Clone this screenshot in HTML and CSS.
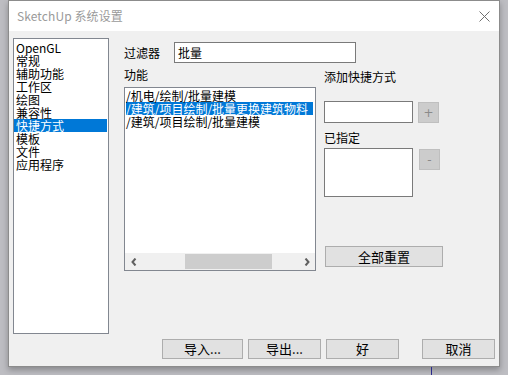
FILE: index.html
```html
<!DOCTYPE html>
<html lang="zh-CN">
<head>
    <meta charset="UTF-8">
    <title>SketchUp 系统设置</title>
    <link rel="stylesheet" href="styles.css">
</head>
<body>
    <div class="window">
        <div class="titlebar">
            <span class="title">SketchUp 系统设置</span>
            <svg class="close" width="11" height="11" viewBox="0 0 11 11">
                <path d="M0.5 0.5 L10.5 10.5 M10.5 0.5 L0.5 10.5" stroke="#707070" stroke-width="1" fill="none"/>
            </svg>
        </div>

        <div class="content">
            <ul class="catlist">
                <li>OpenGL</li>
                <li>常规</li>
                <li>辅助功能</li>
                <li>工作区</li>
                <li>绘图</li>
                <li>兼容性</li>
                <li class="selected">快捷方式</li>
                <li>模板</li>
                <li>文件</li>
                <li>应用程序</li>
            </ul>

            <div class="panel">
                <div class="filter-row">
                    <label class="filter-label">过滤器</label>
                    <div class="textbox filter-box">批量</div>
                </div>

                <div class="columns">
                    <div class="col-func">
                        <div class="label">功能</div>
                        <div class="funclist">
                            <ul class="func-items">
                                <li>/机电/绘制/批量建模</li>
                                <li class="selected">/建筑/项目绘制/批量更换建筑物料</li>
                                <li>/建筑/项目绘制/批量建模</li>
                            </ul>
                            <div class="hscroll">
                                <span class="arrow">
                                    <svg width="6" height="8" viewBox="0 0 6 8"><path d="M4.5 0.5 L1.5 4 L4.5 7.5" stroke="#606060" stroke-width="2" fill="none"/></svg>
                                </span>
                                <div class="track"><div class="thumb"></div></div>
                                <span class="arrow">
                                    <svg width="6" height="8" viewBox="0 0 6 8"><path d="M1.5 0.5 L4.5 4 L1.5 7.5" stroke="#606060" stroke-width="2" fill="none"/></svg>
                                </span>
                            </div>
                        </div>
                    </div>

                    <div class="col-keys">
                        <div class="label label-add">添加快捷方式</div>
                        <div class="key-row">
                            <div class="textbox key-box"></div>
                            <button class="btn small-btn">+</button>
                        </div>
                        <div class="label label-assigned">已指定</div>
                        <div class="key-row">
                            <div class="textbox assigned-box"></div>
                            <button class="btn small-btn minus-btn">-</button>
                        </div>
                        <button class="btn reset-btn">全部重置</button>
                    </div>
                </div>
            </div>
        </div>

        <div class="footer">
            <button class="btn foot-btn import-btn">导入...</button>
            <button class="btn foot-btn">导出...</button>
            <button class="btn foot-btn">好</button>
            <button class="btn foot-btn cancel-btn">取消</button>
        </div>
    </div>
    <div class="behind-line"></div>
</body>
</html>
```

FILE: styles.css
```css
* { box-sizing: border-box; }

body {
    margin: 0;
    width: 508px;
    height: 375px;
    overflow: hidden;
    background: #bdbdc2;
    font-family: "Noto Sans CJK SC", "Noto Sans", sans-serif;
    font-size: 12px;
    color: #000;
    position: relative;
}

.window {
    margin-left: 8px;
    width: 492px;
    height: 367px;
    background: #f0f0f0;
    border: 1px solid #8c8c8c;
    box-shadow: 0 3px 6px rgba(0, 0, 0, 0.28);
    display: flex;
    flex-direction: column;
}

.titlebar {
    height: 30px;
    background: #fff;
    display: flex;
    align-items: center;
    justify-content: space-between;
    padding: 0 9px 0 8px;
    flex: none;
}

.title {
    color: #9a9a9a;
    font-size: 12px;
    line-height: 14px;
    letter-spacing: 0.1px;
}

.close { display: block; }

.content {
    display: flex;
    gap: 15px;
    padding: 7px 4px 0 4px;
}

.catlist {
    list-style: none;
    margin: 0;
    width: 96px;
    height: 296px;
    padding: 2px 1px 0 0;
    background: #fff;
    border: 1px solid #828790;
    flex: none;
}

.catlist li {
    line-height: 13px;
    height: 13px;
    padding-left: 2px;
    white-space: nowrap;
}

.selected {
    background: #0078d7;
    color: #fff;
}

.panel {
    flex: 1;
    padding-top: 4px;
}

.filter-row {
    display: flex;
    align-items: center;
    height: 21px;
}

.filter-label {
    width: 50px;
    line-height: 16px;
}

.textbox {
    background: #fff;
    border: 1px solid #7a7a7a;
}

.filter-box {
    width: 182px;
    height: 21px;
    line-height: 19px;
    padding-left: 3px;
}

.columns {
    display: flex;
    gap: 8px;
}

.label {
    line-height: 16px;
    height: 16px;
}

.col-func .label { margin-top: 4px; }

.funclist {
    margin-top: 4px;
    width: 192px;
    height: 184px;
    background: #fff;
    border: 1px solid #828790;
    display: flex;
    flex-direction: column;
    justify-content: space-between;
}

.func-items {
    list-style: none;
    margin: 0;
    padding: 1px 2px 0 1px;
}

.func-items li {
    line-height: 13px;
    height: 13px;
    white-space: nowrap;
}

.hscroll {
    height: 17px;
    background: #f0f0f0;
    display: flex;
    align-items: center;
}

.arrow {
    width: 17px;
    height: 17px;
    display: flex;
    align-items: center;
    justify-content: center;
}

.arrow svg { display: block; }

.track {
    flex: 1;
    height: 15px;
}

.thumb {
    margin-left: 43px;
    width: 87px;
    height: 15px;
    background: #cdcdcd;
}

.col-keys {
    width: 120px;
}

.label-add { margin-top: 6px; }

.key-row {
    display: flex;
    align-items: flex-start;
    gap: 5px;
    margin-top: 16px;
}

.key-box {
    width: 89px;
    height: 22px;
}

.btn {
    font-family: "Noto Sans CJK SC", "Noto Sans", sans-serif;
    font-size: 12px;
    color: #000;
    background: #e1e1e1;
    border: 1px solid #adadad;
    padding: 0;
    margin: 0;
    line-height: 16px;
}

.small-btn {
    width: 21px;
    height: 21px;
    margin-top: 1px;
    background: #cccccc;
    border-color: #bfbfbf;
    color: #8a8a8a;
    font-family: "DejaVu Sans", sans-serif;
    font-size: 12px;
}

.label-assigned { margin-top: 7px; }

.label-assigned + .key-row { margin-top: 2px; }

.assigned-box {
    width: 89px;
    height: 49px;
}

.minus-btn { margin-left: 1px; }

.reset-btn {
    display: block;
    margin-top: 49px;
    margin-left: 1px;
    width: 118px;
    height: 21px;
    font-size: 13px;
}

.footer {
    display: flex;
    justify-content: flex-end;
    gap: 5px;
    padding: 5px 4px 0 0;
}

.foot-btn {
    width: 73px;
    height: 20px;
    font-size: 13px;
}

.import-btn { width: 81px; }

.cancel-btn { margin-left: 18px; }

.behind-line {
    position: absolute;
    left: 431px;
    top: 367px;
    width: 1px;
    height: 8px;
    background: #2b2b8c;
}
```
